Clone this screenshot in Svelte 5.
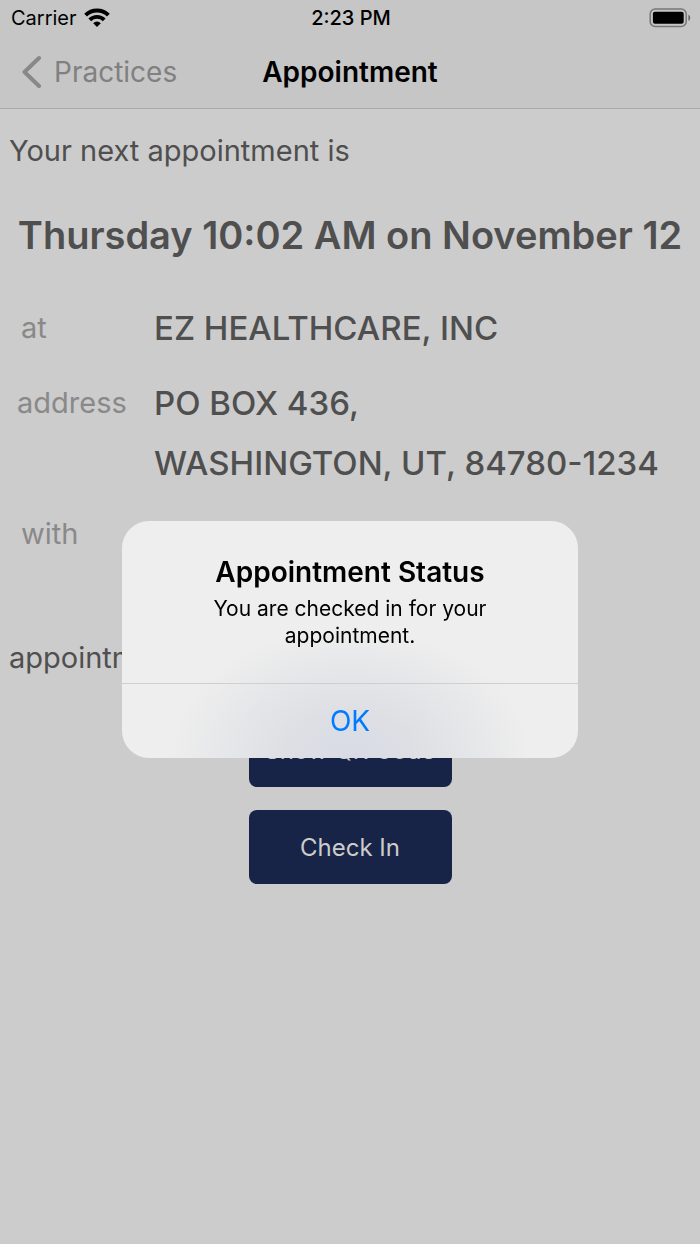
<script>
  let open = $state(true);
  const place = [
    { label: 'at', lines: ['EZ HEALTHCARE, INC'] },
    { label: 'address', lines: ['PO BOX 436,', 'WASHINGTON, UT, 84780-1234'], wide: true },
    { label: 'with', lines: [] }
  ];
</script>

<div class="screen">
  <header>
    <div class="status">
      <div class="carrier">
        <span>Carrier</span>
        <svg width="26" height="20" viewBox="0 0 26 20" aria-hidden="true">
          <g fill="none" stroke="#000" stroke-width="3.9">
            <path d="M1.6 7.2A16 16 0 0 1 24.4 7.2" />
            <path d="M5.8 11.9A10 10 0 0 1 20.2 11.9" />
          </g>
          <path d="M9.2 15.2A5.3 5.3 0 0 1 16.8 15.2L13 19Z" fill="#000" />
        </svg>
      </div>
      <span class="time">2:23 PM</span>
      <svg class="battery" width="42" height="20" viewBox="0 0 42 20" aria-hidden="true">
        <rect x="1.2" y="1" width="36" height="17.5" rx="5" fill="none" stroke="#777" stroke-width="1.5" />
        <rect x="3.9" y="3.8" width="30.8" height="12" rx="2" fill="#000" />
        <path d="M39.4 6.7C41.8 7.5 41.8 12 39.4 12.8Z" fill="#666" />
      </svg>
    </div>
    <nav>
      <button class="back" type="button">
        <svg width="20" height="34" viewBox="0 0 20 34" aria-hidden="true">
          <path d="M17 3L2.5 17L17 31" fill="none" stroke="#888" stroke-width="4" stroke-linecap="round" stroke-linejoin="round" />
        </svg>
        <span>Practices</span>
      </button>
      <h1>Appointment</h1>
    </nav>
  </header>

  <main>
    <p class="intro">Your next appointment is</p>
    <h2>Thursday 10:02 AM on November 12</h2>
    <dl>
      {#each place as row}
        <div class="row">
          <dt class:wide={row.wide}>{row.label}</dt>
          <dd>
            {#each row.lines as line}<span>{line}</span>{/each}
          </dd>
        </div>
      {/each}
    </dl>
    <p class="note">appointment</p>
    <div class="actions">
      <button type="button">Show QR Code</button>
      <button type="button" onclick={() => (open = true)}>Check In</button>
    </div>
  </main>

  {#if open}
    <div class="overlay">
      <div class="alert" role="alertdialog" aria-labelledby="alert-title" aria-describedby="alert-text">
        <div class="message">
          <h3 id="alert-title">Appointment Status</h3>
          <p id="alert-text">You are checked in for your appointment.</p>
        </div>
        <button type="button" onclick={() => (open = false)}>OK</button>
      </div>
    </div>
  {/if}
</div>

<style>
  :global(body) {
    margin: 0;
    background: #ccc;
  }
  .screen {
    min-height: 100vh;
    background: #ccc;
    color: #4f4f4f;
    font-family: Inter, "Liberation Sans", sans-serif;
  }
  h1, h2, h3, p, dl, dd {
    margin: 0;
  }
  button {
    border: 0;
    font-family: inherit;
    cursor: pointer;
  }
  header {
    background: #c6c6c6;
    border-bottom: 1px solid #aaa;
    color: #000;
  }
  .status {
    display: grid;
    grid-template-columns: 1fr auto 1fr;
    align-items: center;
    height: 36px;
    padding: 0 9px 0 11px;
    font-size: 20px;
  }
  .carrier {
    display: flex;
    align-items: center;
    gap: 7px;
  }
  .time {
    font-weight: 500;
  }
  .battery {
    justify-self: end;
  }
  nav {
    display: grid;
    grid-template-columns: 1fr auto 1fr;
    align-items: center;
    height: 72px;
    padding: 0 22px;
  }
  .back {
    display: flex;
    align-items: center;
    gap: 12px;
    padding: 0;
    background: none;
    color: #808080;
    font-size: 28px;
  }
  h1, h3 {
    font-size: 28px;
    font-weight: 600;
    line-height: 36px;
  }
  main {
    padding: 24px 0;
  }
  .intro, .note {
    padding: 0 9px;
    font-size: 29px;
    line-height: 36px;
  }
  h2 {
    margin-top: 42px;
    font-size: 38px;
    font-weight: 600;
    line-height: 48px;
    text-align: center;
    white-space: nowrap;
  }
  dl {
    display: grid;
    grid-template-rows: minmax(75px, auto) minmax(131px, auto) auto;
    margin-top: 49px;
  }
  .row {
    display: grid;
    grid-template-columns: 154px 1fr;
    line-height: 40px;
  }
  dt {
    padding-left: 21px;
    color: #898989;
    font-size: 29px;
  }
  dt.wide {
    padding-left: 17px;
  }
  dd {
    display: flex;
    flex-direction: column;
    gap: 20px;
    font-size: 33px;
    font-weight: 500;
  }
  .note {
    margin-top: 86px;
  }
  .actions {
    display: flex;
    flex-direction: column;
    align-items: center;
    gap: 23px;
    margin-top: 37px;
  }
  .actions button {
    width: 203px;
    height: 74px;
    padding: 0;
    border-radius: 8px;
    background: #172447;
    color: #ccc;
    font-size: 24px;
  }
  .overlay {
    position: fixed;
    inset: 0;
    display: grid;
    place-items: center;
    padding-top: 34px;
  }
  .alert {
    width: 456px;
    overflow: hidden;
    border-radius: 27px;
    background: radial-gradient(ellipse 180px 130px at 50% 100%, #d8dbe5, #dddfe4 35%, #e6e7e9 70%, #eee), #eee;
    color: #000;
    text-align: center;
  }
  .message {
    padding: 33px 60px 34px;
  }
  .message p {
    padding: 5px 0 0;
    font-size: 21px;
    line-height: 27px;
  }
  .alert button {
    display: block;
    width: 100%;
    height: 75px;
    border-top: 1px solid #cecfd1;
    background: none;
    color: #007aff;
    font-size: 28px;
  }
</style>
